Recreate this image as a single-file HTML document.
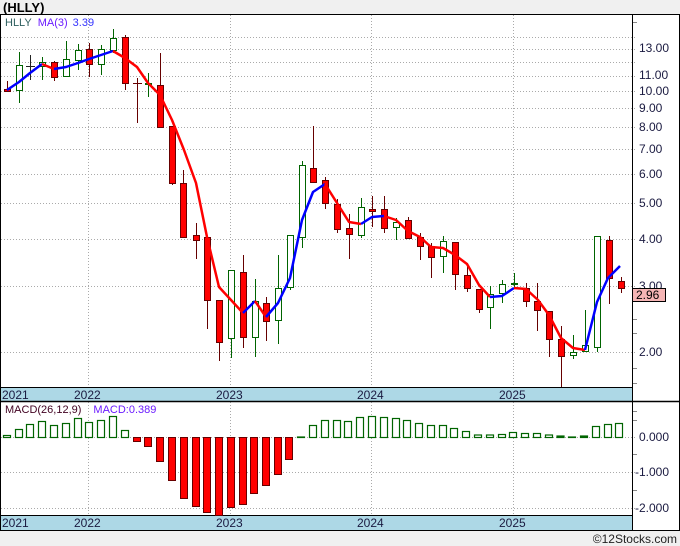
<!DOCTYPE html>
<html><head><meta charset="utf-8"><style>
html,body{margin:0;padding:0;background:#f0f0f0;}
svg{display:block;font-family:"Liberation Sans",sans-serif;}
</style></head><body>
<svg width="680" height="546" viewBox="0 0 680 546" xmlns="http://www.w3.org/2000/svg">
<rect x="0" y="0" width="680" height="546" fill="#f0f0f0"/>
<text x="3" y="12" font-size="13" font-weight="bold" fill="#000">(HLLY)</text>
<rect x="0.5" y="14.5" width="679" height="516" fill="#fff" stroke="#000"/>
<!-- grid main -->
<g stroke="#aaa" stroke-dasharray="1,2" stroke-width="1">
<line x1="1" y1="37.5" x2="637" y2="37.5"/><line x1="1" y1="49.5" x2="637" y2="49.5"/><line x1="1" y1="62.5" x2="637" y2="62.5"/><line x1="1" y1="76.5" x2="637" y2="76.5"/><line x1="1" y1="91.5" x2="637" y2="91.5"/><line x1="1" y1="108.5" x2="637" y2="108.5"/><line x1="1" y1="127.5" x2="637" y2="127.5"/><line x1="1" y1="149.5" x2="637" y2="149.5"/><line x1="1" y1="174.5" x2="637" y2="174.5"/><line x1="1" y1="203.5" x2="637" y2="203.5"/><line x1="1" y1="239.5" x2="637" y2="239.5"/><line x1="1" y1="286.5" x2="637" y2="286.5"/><line x1="1" y1="352.5" x2="637" y2="352.5"/>
<line x1="88.5" y1="15" x2="88.5" y2="387"/><line x1="230.5" y1="15" x2="230.5" y2="387"/><line x1="371.5" y1="15" x2="371.5" y2="387"/><line x1="513.5" y1="15" x2="513.5" y2="387"/>
<line x1="1" y1="437.5" x2="637" y2="437.5"/><line x1="1" y1="472.5" x2="637" y2="472.5"/><line x1="1" y1="508.5" x2="637" y2="508.5"/>
<line x1="88.5" y1="402" x2="88.5" y2="515"/><line x1="230.5" y1="402" x2="230.5" y2="515"/><line x1="371.5" y1="402" x2="371.5" y2="515"/><line x1="513.5" y1="402" x2="513.5" y2="515"/>
</g>
<!-- axis ticks -->
<g stroke="#888"><line x1="632" y1="22.5" x2="637" y2="22.5"/><line x1="632" y1="368.5" x2="637" y2="368.5"/><line x1="632" y1="383.5" x2="637" y2="383.5"/><line x1="632" y1="319.5" x2="637" y2="319.5"/><line x1="632" y1="301.5" x2="637" y2="301.5"/><line x1="632" y1="333.5" x2="637" y2="333.5"/><line x1="632" y1="420.5" x2="637" y2="420.5"/><line x1="632" y1="454.5" x2="637" y2="454.5"/><line x1="632" y1="490.5" x2="637" y2="490.5"/><line x1="632" y1="411.5" x2="637" y2="411.5"/></g>
<g font-size="12" fill="#1a1a40">
<text x="639" y="52">13.00</text><text x="639" y="79">11.00</text><text x="639" y="95">10.00</text><text x="639" y="112">9.00</text><text x="639" y="131">8.00</text><text x="639" y="153">7.00</text><text x="639" y="178">6.00</text><text x="639" y="207">5.00</text><text x="639" y="243">4.00</text><text x="639" y="290">3.00</text><text x="639" y="356">2.00</text>
<text x="639" y="441">0.000</text><text x="635" y="476">-1.000</text><text x="635" y="512">-2.000</text>
</g>
<rect x="632.5" y="288.5" width="33" height="13" fill="#f5b5b5" stroke="#000"/>
<text x="636" y="299" font-size="12" fill="#000">2.96</text>
<!-- strips -->
<rect x="1" y="387" width="631" height="14" fill="#add8e6"/>
<line x1="0" y1="387.5" x2="632" y2="387.5" stroke="#000"/>
<line x1="0" y1="401.5" x2="680" y2="401.5" stroke="#000" stroke-width="1.5"/>
<rect x="1" y="515" width="631" height="15" fill="#add8e6"/>
<line x1="0" y1="515.5" x2="632" y2="515.5" stroke="#000"/>
<line x1="632.5" y1="14" x2="632.5" y2="530" stroke="#000"/>
<g font-size="12" fill="#1a1a40">
<text x="2" y="399">2021</text><text x="74" y="399">2022</text><text x="216" y="399">2023</text><text x="357" y="399">2024</text><text x="499" y="399">2025</text>
<text x="2" y="527">2021</text><text x="74" y="527">2022</text><text x="216" y="527">2023</text><text x="357" y="527">2024</text><text x="499" y="527">2025</text>
</g>
<text x="5" y="26" font-size="11"><tspan fill="#2f5f5f">HLLY</tspan><tspan fill="#6a1aff" dx="6">MA(3)</tspan><tspan fill="#3333ff" dx="5">3.39</tspan></text>
<text x="5" y="413" font-size="11"><tspan fill="#400020">MACD(26,12,9)</tspan><tspan fill="#6a1aff" dx="12">MACD:0.389</tspan></text>
<!-- candles -->
<g stroke-width="1">
<g stroke="#006400" fill="#fff">
<line x1="19.5" y1="52" x2="19.5" y2="103"/><rect x="16.5" y="65.5" width="6" height="25"/>
<line x1="42.5" y1="57" x2="42.5" y2="80"/><rect x="39.5" y="62.5" width="6" height="4"/>
<line x1="66.5" y1="41" x2="66.5" y2="77"/><rect x="63.5" y="59.5" width="6" height="17"/>
<line x1="78.5" y1="44" x2="78.5" y2="70"/><rect x="75.5" y="50.5" width="6" height="10"/>
<line x1="101.5" y1="45" x2="101.5" y2="75"/><rect x="98.5" y="49.5" width="6" height="15"/>
<line x1="113.5" y1="29" x2="113.5" y2="53"/><rect x="110.5" y="38.5" width="6" height="12"/>
<line x1="148.5" y1="73" x2="148.5" y2="97"/><rect x="145.5" y="83.5" width="6" height="1"/>
<line x1="231.5" y1="270" x2="231.5" y2="358"/><rect x="228.5" y="270.5" width="6" height="68"/>
<line x1="255.5" y1="279" x2="255.5" y2="357"/><rect x="252.5" y="301.5" width="6" height="36"/>
<line x1="278.5" y1="255" x2="278.5" y2="344"/><rect x="275.5" y="288.5" width="6" height="32"/>
<line x1="290.5" y1="235" x2="290.5" y2="290"/><rect x="287.5" y="235.5" width="6" height="52"/>
<line x1="302.5" y1="161" x2="302.5" y2="248"/><rect x="299.5" y="165.5" width="6" height="72"/>
<line x1="361.5" y1="198" x2="361.5" y2="238"/><rect x="358.5" y="207.5" width="6" height="28"/>
<line x1="396.5" y1="218" x2="396.5" y2="240"/><rect x="393.5" y="222.5" width="6" height="5"/>
<line x1="443.5" y1="236" x2="443.5" y2="273"/><rect x="440.5" y="241.5" width="6" height="15"/>
<line x1="490.5" y1="286" x2="490.5" y2="329"/><rect x="487.5" y="294.5" width="6" height="13"/>
<line x1="502.5" y1="280" x2="502.5" y2="303"/><rect x="499.5" y="284.5" width="6" height="9"/>
<line x1="514.5" y1="273" x2="514.5" y2="288"/><rect x="511.5" y="283.5" width="6" height="1"/>
<line x1="573.5" y1="335" x2="573.5" y2="359"/><rect x="570.5" y="352.5" width="6" height="3"/>
<line x1="585.5" y1="310" x2="585.5" y2="352"/><rect x="582.5" y="345.5" width="6" height="6"/>
<line x1="597.5" y1="236" x2="597.5" y2="352"/><rect x="594.5" y="236.5" width="6" height="111"/>
</g>
<g stroke="#600" fill="#f00">
<line x1="7.5" y1="81" x2="7.5" y2="91"/><rect x="4.5" y="89.5" width="6" height="2"/>
<line x1="54.5" y1="61" x2="54.5" y2="81"/><rect x="51.5" y="62.5" width="6" height="15"/>
<line x1="89.5" y1="43" x2="89.5" y2="77"/><rect x="86.5" y="49.5" width="6" height="15"/>
<line x1="125.5" y1="35" x2="125.5" y2="90"/><rect x="122.5" y="37.5" width="6" height="46"/>
<line x1="160.5" y1="53" x2="160.5" y2="127"/><rect x="157.5" y="85.5" width="6" height="42"/>
<line x1="172.5" y1="126" x2="172.5" y2="185"/><rect x="169.5" y="126.5" width="6" height="57"/>
<line x1="183.5" y1="170" x2="183.5" y2="237"/><rect x="180.5" y="183.5" width="6" height="54"/>
<line x1="196.5" y1="223" x2="196.5" y2="259"/><rect x="193.5" y="235.5" width="6" height="5"/>
<line x1="207.5" y1="237" x2="207.5" y2="329"/><rect x="204.5" y="237.5" width="6" height="63"/>
<line x1="219.5" y1="300" x2="219.5" y2="361"/><rect x="216.5" y="300.5" width="6" height="42"/>
<line x1="243.5" y1="255" x2="243.5" y2="348"/><rect x="240.5" y="272.5" width="6" height="65"/>
<line x1="266.5" y1="297" x2="266.5" y2="341"/><rect x="263.5" y="303.5" width="6" height="18"/>
<line x1="313.5" y1="126" x2="313.5" y2="183"/><rect x="310.5" y="168.5" width="6" height="14"/>
<line x1="325.5" y1="177" x2="325.5" y2="209"/><rect x="322.5" y="180.5" width="6" height="23"/>
<line x1="337.5" y1="199" x2="337.5" y2="233"/><rect x="334.5" y="204.5" width="6" height="25"/>
<line x1="349.5" y1="214" x2="349.5" y2="259"/><rect x="346.5" y="228.5" width="6" height="6"/>
<line x1="372.5" y1="196" x2="372.5" y2="227"/><rect x="369.5" y="209.5" width="6" height="2"/>
<line x1="384.5" y1="196" x2="384.5" y2="233"/><rect x="381.5" y="209.5" width="6" height="19"/>
<line x1="408.5" y1="217" x2="408.5" y2="239"/><rect x="405.5" y="220.5" width="6" height="18"/>
<line x1="420.5" y1="233" x2="420.5" y2="260"/><rect x="417.5" y="237.5" width="6" height="9"/>
<line x1="431.5" y1="243" x2="431.5" y2="278"/><rect x="428.5" y="246.5" width="6" height="11"/>
<line x1="455.5" y1="242" x2="455.5" y2="290"/><rect x="452.5" y="242.5" width="6" height="32"/>
<line x1="467.5" y1="263" x2="467.5" y2="292"/><rect x="464.5" y="275.5" width="6" height="13"/>
<line x1="479.5" y1="289" x2="479.5" y2="313"/><rect x="476.5" y="289.5" width="6" height="20"/>
<line x1="526.5" y1="283" x2="526.5" y2="307"/><rect x="523.5" y="288.5" width="6" height="13"/>
<line x1="537.5" y1="283" x2="537.5" y2="331"/><rect x="534.5" y="301.5" width="6" height="9"/>
<line x1="549.5" y1="311" x2="549.5" y2="357"/><rect x="546.5" y="311.5" width="6" height="28"/>
<line x1="561.5" y1="326" x2="561.5" y2="387"/><rect x="558.5" y="339.5" width="6" height="17"/>
<line x1="609.5" y1="236" x2="609.5" y2="304"/><rect x="606.5" y="240.5" width="6" height="38"/>
<line x1="621.5" y1="277" x2="621.5" y2="293"/><rect x="618.5" y="281.5" width="6" height="7"/>
</g>
<g stroke="#222"><line x1="30.5" y1="55" x2="30.5" y2="80"/><line x1="26" y1="66.5" x2="35" y2="66.5"/></g>
<g stroke="#600"><line x1="137.5" y1="78" x2="137.5" y2="123"/><line x1="133" y1="83.5" x2="142" y2="83.5"/></g>
</g>
<!-- MA -->
<g fill="none" stroke-width="2.5" stroke-linejoin="round">
<polyline stroke="#0000ff" points="7,90 19,82 30,73 42,64"/>
<polyline stroke="#ff0000" points="42,64 54,69"/>
<polyline stroke="#0000ff" points="54,69 66,67 78,63 89,59 101,55 113,51"/>
<polyline stroke="#ff0000" points="113,51 125,58 137,67 148,83 160,95 172,120 184,150 196,183 207,237 219,287 231,300 243,313"/>
<polyline stroke="#0000ff" points="243,313 255,301"/>
<polyline stroke="#ff0000" points="255,301 266,317"/>
<polyline stroke="#0000ff" points="266,317 278,303 290,278 302,220 313,192 325,184"/>
<polyline stroke="#ff0000" points="325,184 337,203 349,222 361,224"/>
<polyline stroke="#0000ff" points="361,224 372,217 384,216"/>
<polyline stroke="#ff0000" points="384,216 396,220 408,231 420,237 431,247 443,248 455,255 467,264 479,285 490,297"/>
<polyline stroke="#0000ff" points="490,297 502,296 514,288"/>
<polyline stroke="#ff0000" points="514,288 526,289 538,300 549,315 561,338 573,348 585,350"/>
<polyline stroke="#0000ff" points="585,350 597,302 608,278 620,266"/>
</g>
<!-- MACD bars -->
<g stroke="#006400" fill="#fff" stroke-width="1.2">
<rect x="3.5" y="435.5" width="7" height="2"/><rect x="15.5" y="429.5" width="7" height="8"/><rect x="26.5" y="424.5" width="7" height="13"/><rect x="38.5" y="421.5" width="7" height="16"/><rect x="50.5" y="425.5" width="7" height="12"/><rect x="62.5" y="423.5" width="7" height="14"/><rect x="74.5" y="418.5" width="7" height="19"/><rect x="85.5" y="422.5" width="7" height="15"/><rect x="97.5" y="420.5" width="7" height="17"/><rect x="109.5" y="416.5" width="7" height="21"/><rect x="121.5" y="430.5" width="7" height="7"/>
<rect x="297.5" y="437" width="7" height="0.5"/><rect x="309.5" y="425.5" width="7" height="12"/><rect x="321.5" y="420.5" width="7" height="17"/><rect x="333.5" y="420.5" width="7" height="17"/><rect x="344.5" y="421.5" width="7" height="16"/><rect x="356.5" y="417.5" width="7" height="20"/><rect x="368.5" y="416.5" width="7" height="21"/><rect x="380.5" y="417.5" width="7" height="20"/><rect x="392.5" y="418.5" width="7" height="19"/><rect x="403.5" y="420.5" width="7" height="17"/><rect x="415.5" y="423.5" width="7" height="14"/><rect x="427.5" y="425.5" width="7" height="12"/><rect x="439.5" y="425.5" width="7" height="12"/><rect x="450.5" y="428.5" width="7" height="9"/><rect x="462.5" y="431.5" width="7" height="6"/><rect x="474.5" y="435" width="7" height="2.5"/><rect x="486.5" y="435" width="7" height="2.5"/><rect x="498.5" y="434.5" width="7" height="3"/><rect x="509.5" y="432.5" width="7" height="5"/><rect x="521.5" y="433.5" width="7" height="4"/><rect x="533.5" y="433.5" width="7" height="4"/><rect x="545.5" y="435" width="7" height="2.5"/><rect x="557" y="436" width="7" height="1.5" fill="#006400"/><rect x="568.5" y="437" width="7" height="0.5"/><rect x="580.5" y="436" width="7" height="1.5" fill="#006400"/><rect x="592.5" y="426.5" width="7" height="11"/><rect x="604.5" y="424.5" width="7" height="13"/><rect x="615.5" y="423.5" width="7" height="14"/>
</g>
<g stroke="#600" fill="#f00">
<rect x="133.5" y="437.5" width="7" height="4"/><rect x="144.5" y="437.5" width="7" height="9"/><rect x="156.5" y="437.5" width="7" height="24"/><rect x="168.5" y="437.5" width="7" height="43"/><rect x="180.5" y="437.5" width="7" height="61"/><rect x="192.5" y="437.5" width="7" height="69"/><rect x="203.5" y="437.5" width="7" height="75"/><rect x="215.5" y="437.5" width="7" height="78"/><rect x="227.5" y="437.5" width="7" height="70"/><rect x="239.5" y="437.5" width="7" height="67"/><rect x="250.5" y="437.5" width="7" height="56"/><rect x="262.5" y="437.5" width="7" height="48"/><rect x="274.5" y="437.5" width="7" height="37"/><rect x="285.5" y="437.5" width="7" height="22"/>
</g>
<text x="677" y="543" font-size="12" fill="#222" text-anchor="end">©12Stocks.com</text>
</svg>
</body></html>
